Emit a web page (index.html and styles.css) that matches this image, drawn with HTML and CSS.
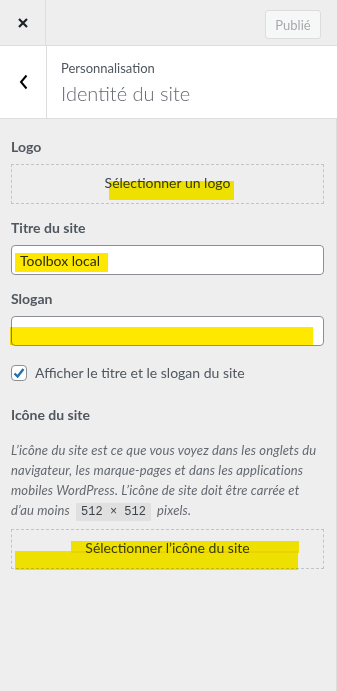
FILE: index.html
```html
<!DOCTYPE html>
<html lang="fr">
<head>
    <meta charset="UTF-8">
    <meta name="viewport" content="width=device-width, initial-scale=1.0">
    <title>Personnalisation | Identité du site</title>
    <link rel="stylesheet" href="styles.css">
</head>
<body>

    <div class="panel">
        <div class="topbar">
            <button class="close-btn" aria-label="Fermer">
                <svg width="10" height="10" viewBox="0 0 10 10"><path d="M1 1 L9 9 M9 1 L1 9" stroke="#1d2327" stroke-width="2.2" fill="none"/></svg>
            </button>
            <div class="topbar-actions">
                <button class="publish-btn" disabled>Publié</button>
            </div>
        </div>

        <div class="section-head">
            <button class="back-btn" aria-label="Retour">
                <svg width="10" height="16" viewBox="0 0 10 16"><path d="M7.5 1.5 L2 8 L7.5 14.5" stroke="#000" stroke-width="2" fill="none"/></svg>
            </button>
            <div class="section-titles">
                <span class="crumb">Personnalisation</span>
                <h2>Identité du site</h2>
            </div>
        </div>

        <div class="controls">
            <div class="control">
                <span class="control-title">Logo</span>
                <div class="upload-box">
                    <span class="marker marker-logo"></span>
                    Sélectionner un logo
                </div>
            </div>

            <div class="control">
                <span class="control-title">Titre du site</span>
                <div class="field">
                    <input type="text" value="Toolbox local">
                    <span class="marker marker-title"></span>
                </div>
            </div>

            <div class="control">
                <span class="control-title">Slogan</span>
                <div class="field">
                    <input type="text" value="">
                    <span class="marker marker-slogan"></span>
                </div>
            </div>

            <label class="check-row">
                <span class="checkbox">
                    <svg width="14" height="14" viewBox="0 0 14 14"><path d="M2.5 7.5 L5.6 10.5 L11.5 3" stroke="#2271b1" stroke-width="2.4" fill="none"/></svg>
                </span>
                Afficher le titre et le slogan du site
            </label>

            <div class="control icon-control">
                <span class="control-title">Icône du site</span>
                <p class="description">L’icône du site est ce que vous voyez dans les onglets du navigateur, les marque-pages et dans les applications mobiles WordPress. L’icône de site doit être carrée et d’au moins <code>512 × 512</code> pixels.</p>
                <div class="upload-box">
                    <span class="marker marker-icon-a"></span>
                    <span class="marker marker-icon-b"></span>
                    Sélectionner l’icône du site
                </div>
            </div>
        </div>
    </div>

</body>
</html>
```

FILE: styles.css
```css
body {
    margin: 0;
    padding: 0;
    background-color: #eeeeee;
    font-family: 'Lato', 'Noto Sans', sans-serif;
    color: #50575e;
}

.panel {
    min-height: 691px;
    background-color: #eeeeee;
    display: flex;
    flex-direction: column;
}

/* barre du haut */
.topbar {
    height: 45px;
    display: flex;
    border-bottom: 1px solid #dddddd;
}

.close-btn {
    width: 46px;
    height: 45px;
    border: none;
    border-right: 1px solid #dddddd;
    background: transparent;
    display: flex;
    align-items: center;
    justify-content: center;
    padding: 0 0 0 1px;
}

.topbar-actions {
    flex: 1;
    display: flex;
    justify-content: flex-end;
    align-items: flex-start;
    padding: 10px 16px 0 0;
}

.publish-btn {
    width: 56px;
    height: 29px;
    background-color: #f6f7f7;
    border: 1px solid #dcdcde;
    border-radius: 3px;
    color: #a7aaad;
    font-family: inherit;
    font-size: 13px;
    padding: 0;
}

/* en-tete de section */
.section-head {
    height: 72px;
    display: flex;
    background-color: #fff;
    border-bottom: 1px solid #dddddd;
}

.back-btn {
    width: 47px;
    border: none;
    border-right: 1px solid #dddddd;
    background: transparent;
    display: flex;
    align-items: center;
    justify-content: center;
    padding: 0 0 0 2px;
}

.section-titles {
    padding: 13px 0 0 14px;
    display: flex;
    flex-direction: column;
}

.crumb {
    font-size: 13px;
    line-height: 18px;
    color: #50575e;
}

.section-titles h2 {
    margin: 2px 0 0;
    font-size: 20px;
    font-weight: 300;
    line-height: 28px;
    color: #646970;
}

/* controles */
.controls {
    flex: 1;
    padding: 18px 12px 0 11px;
    border-right: 1px solid #dddddd;
}

.control {
    margin-bottom: 14px;
}

.control-title {
    display: block;
    font-size: 14px;
    font-weight: 700;
    line-height: 20px;
    margin-bottom: 7px;
    color: #50575e;
}

.upload-box {
    position: relative;
    height: 20px;
    padding: 8px 0 10px;
    border: 1px dashed #c3c4c7;
    text-align: center;
    font-size: 14px;
    line-height: 20px;
    color: #3c434a;
}

.field {
    position: relative;
}

.field input {
    display: block;
    box-sizing: border-box;
    width: 100%;
    height: 30px;
    margin: 0;
    padding: 0 8px;
    border: 1px solid #8c8f94;
    border-radius: 4px;
    background-color: #fff;
    font-family: inherit;
    font-size: 14px;
    color: #2c3338;
}

.check-row {
    display: flex;
    align-items: center;
    gap: 8px;
    margin: 17px 0 22px;
    font-size: 14px;
    line-height: 20px;
    color: #50575e;
}

.checkbox {
    width: 14px;
    height: 14px;
    border: 1px solid #8c8f94;
    border-radius: 4px;
    background-color: #fff;
    display: flex;
    align-items: center;
    justify-content: center;
}

.icon-control .control-title {
    margin-bottom: 15px;
}

.description {
    margin: 0 0 9px;
    font-size: 13px;
    line-height: 20px;
    letter-spacing: 0.14px;
    font-style: italic;
    color: #646970;
}

.description code {
    font-family: 'Liberation Mono', monospace;
    font-style: normal;
    font-size: 12px;
    line-height: 14px;
    letter-spacing: 0;
    background-color: #e0e0e0;
    padding: 2px 5px;
    margin: 0 3px;
    color: #3c434a;
}

/* surlignages jaunes */
.marker {
    position: absolute;
    mix-blend-mode: multiply;
    background-color: #ffe800;
}

.marker-logo { left: 97px; top: 16px; width: 125px; height: 19px; background-color: #fff000; }
.marker-title { left: 4px; top: 8px; width: 93px; height: 19px; }
.marker-slogan { left: -1px; top: 11px; width: 303px; height: 18px; }
.marker-icon-a { left: 59px; top: 11px; width: 228px; height: 12px; background-color: #fff000; }
.marker-icon-b { left: 3px; top: 21px; width: 283px; height: 19px; background-color: #fff000; }
```
